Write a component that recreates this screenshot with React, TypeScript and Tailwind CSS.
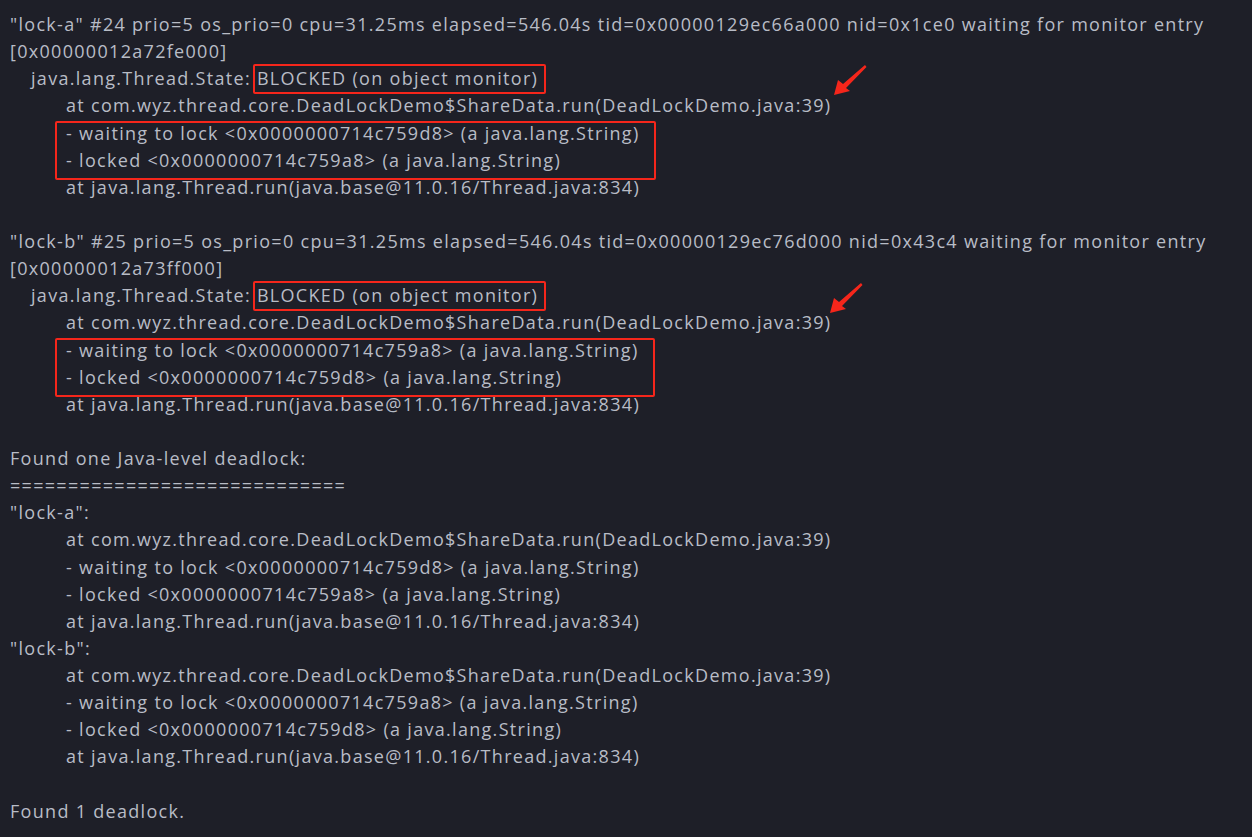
import React from "react";

const Line = ({ children, i = 0 }: { children: React.ReactNode; i?: 0 | 1 | 2 }) => (
  <div
    className={
      "h-[27.14px] whitespace-pre " +
      (i === 0 ? "pl-0" : i === 1 ? "pl-[21px]" : "pl-[56px]")
    }
  >
    {children}
  </div>
);

const Boxed = ({ children }: { children: React.ReactNode }) => (
  <span className="relative">
    {children}
    <span className="absolute -left-[4px] -right-[8px] -top-[2px] -bottom-[4px] border-2 border-[#f5261b] rounded-[2px]" />
  </span>
);

const Arrow = ({ className }: { className: string }) => (
  <svg className={"absolute " + className} width="40" height="36" viewBox="0 0 40 36">
    <polygon points="5,33 9,18 14,22 36,3 37.5,5 17,26 21,29" fill="#f5261b" />
  </svg>
);

const Thread = ({ name, num, tid, nid, addr, waitA, lockB }: { name: string; num: string; tid: string; nid: string; addr: string; waitA: string; lockB: string }) => (
  <>
    <Line>{`"${name}" #${num} prio=5 os_prio=0 cpu=31.25ms elapsed=546.04s tid=${tid} nid=${nid} waiting for monitor entry`}</Line>
    <Line>{`[${addr}]`}</Line>
    <Line i={1}>
      java.lang.Thread.State: <Boxed>BLOCKED (on object monitor)</Boxed>
    </Line>
    <Line i={2}>at com.wyz.thread.core.DeadLockDemo$ShareData.run(DeadLockDemo.java:39)</Line>
    <div className="relative ml-[56px] w-fit">
      <div className="h-[27.14px] whitespace-pre">{`- waiting to lock <${waitA}> (a java.lang.String)`}</div>
      <div className="h-[27.14px] whitespace-pre">{`- locked <${lockB}> (a java.lang.String)`}</div>
      <span className="absolute -left-[11px] -right-[16px] top-[1px] -bottom-[6px] border-2 border-[#f5261b] rounded-[2px]" />
    </div>
    <Line i={2}>at java.lang.Thread.run(java.base@11.0.16/Thread.java:834)</Line>
  </>
);

export default function App() {
  const A = "0x0000000714c759d8";
  const B = "0x0000000714c759a8";
  return (
    <div className="relative w-[1252px] h-[837px] overflow-hidden bg-[#1e1f28] text-[#b8bcc6] text-[18px] tracking-[1.3px] pl-[10px] pt-[11px] font-['Open_Sans','Noto_Sans',sans-serif]">
      <Thread name="lock-a" num="24" tid="0x00000129ec66a000" nid="0x1ce0" addr="0x00000012a72fe000" waitA={A} lockB={B} />
      <Line>{" "}</Line>
      <Thread name="lock-b" num="25" tid="0x00000129ec76d000" nid="0x43c4" addr="0x00000012a73ff000" waitA={B} lockB={A} />
      <Line>{" "}</Line>
      <Line>Found one Java-level deadlock:</Line>
      <Line>=============================</Line>
      <Line>"lock-a":</Line>
      <Line i={2}>at com.wyz.thread.core.DeadLockDemo$ShareData.run(DeadLockDemo.java:39)</Line>
      <Line i={2}>{`- waiting to lock <${A}> (a java.lang.String)`}</Line>
      <Line i={2}>{`- locked <${B}> (a java.lang.String)`}</Line>
      <Line i={2}>at java.lang.Thread.run(java.base@11.0.16/Thread.java:834)</Line>
      <Line>"lock-b":</Line>
      <Line i={2}>at com.wyz.thread.core.DeadLockDemo$ShareData.run(DeadLockDemo.java:39)</Line>
      <Line i={2}>{`- waiting to lock <${B}> (a java.lang.String)`}</Line>
      <Line i={2}>{`- locked <${A}> (a java.lang.String)`}</Line>
      <Line i={2}>at java.lang.Thread.run(java.base@11.0.16/Thread.java:834)</Line>
      <Line>{" "}</Line>
      <Line>Found 1 deadlock.</Line>
      <Arrow className="left-[829px] top-[62px]" />
      <Arrow className="left-[825px] top-[280px]" />
    </div>
  );
}
